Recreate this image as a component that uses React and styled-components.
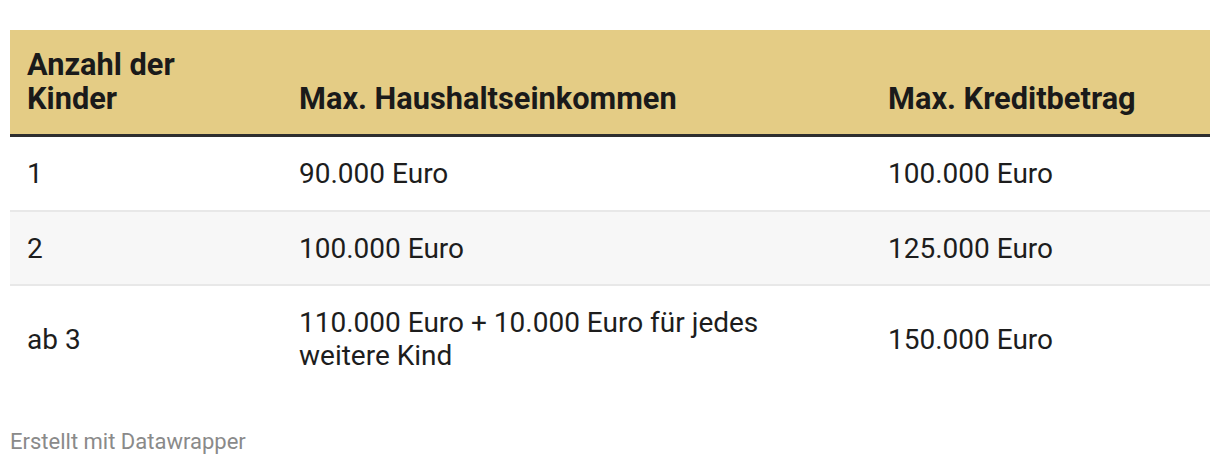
import React from "react";
import styled, { createGlobalStyle } from "styled-components";

const Global = createGlobalStyle`
  html, body { margin: 0; padding: 0; background: #fff; }
  body { font-family: Roboto, "Liberation Sans", Arial, sans-serif; color: #1d1d1d; }
`;

const Page = styled.div`
  padding: 30px 10px 0 10px;
  width: 1200px;
`;

const Table = styled.table`
  width: 1200px;
  border-collapse: collapse;
  table-layout: fixed;
  font-size: 28px;
  line-height: 33px;
`;

const HeadRow = styled.tr`
  background: #e4cc85;
  border-bottom: 3px solid #2e2e2e;
`;

const Th = styled.th`
  text-align: left;
  vertical-align: bottom;
  font-weight: 700;
  font-size: 30.75px;
  line-height: 34px;
  color: #1a1a1a;
  padding: 18px 17px 18px 17px;
`;

const Row = styled.tr`
  background: ${(p) => (p.$striped ? "#f7f7f7" : "#fff")};
  border-bottom: ${(p) => (p.$last ? "none" : "2px solid #e8e8e8")};
`;

const Td = styled.td`
  vertical-align: middle;
  padding: 20px 17px 19.5px 17px;
  color: #1d1d1d;
`;

const Footer = styled.div`
  margin-top: 37px;
  font-size: 22px;
  line-height: 26px;
  color: #8a8a8a;
`;

const rows = [
  ["1", "90.000 Euro", "100.000 Euro"],
  ["2", "100.000 Euro", "125.000 Euro"],
  ["ab 3", "110.000 Euro + 10.000 Euro für jedes weitere Kind", "150.000 Euro"],
];

export default function App() {
  return (
    <>
      <Global />
      <Page>
        <Table>
          <colgroup>
            <col style={{ width: 272 }} />
            <col style={{ width: 589 }} />
            <col style={{ width: 339 }} />
          </colgroup>
          <thead>
            <HeadRow>
              <Th>Anzahl der Kinder</Th>
              <Th>Max. Haushaltseinkommen</Th>
              <Th>Max. Kreditbetrag</Th>
            </HeadRow>
          </thead>
          <tbody>
            {rows.map((r, i) => (
              <Row key={i} $striped={i === 1} $last={i === rows.length - 1}>
                {r.map((c, j) => (
                  <Td key={j}>{c}</Td>
                ))}
              </Row>
            ))}
          </tbody>
        </Table>
        <Footer>Erstellt mit Datawrapper</Footer>
      </Page>
    </>
  );
}
